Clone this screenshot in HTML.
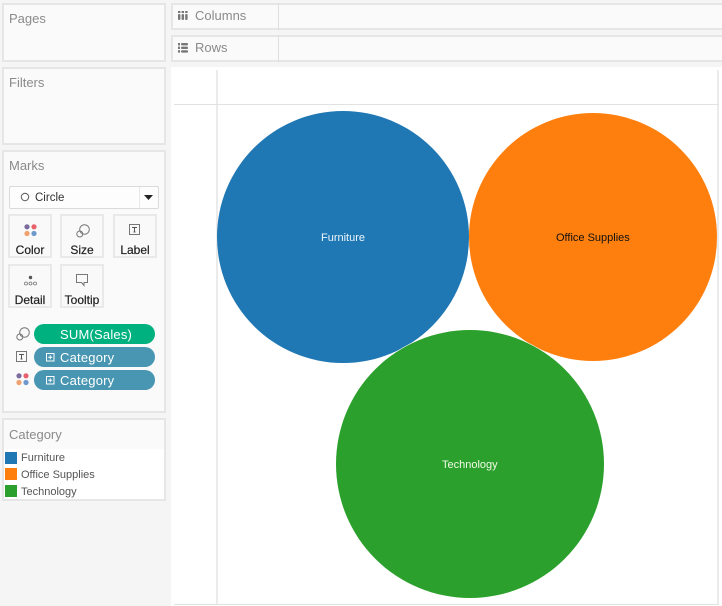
<!DOCTYPE html>
<html><head><meta charset="utf-8">
<style>
html,body{margin:0;padding:0}
body{width:722px;height:606px;overflow:hidden;background:#f5f5f5;position:relative;font-family:"Liberation Sans",sans-serif}
.a{position:absolute;box-sizing:border-box}
.p{background:#fafafa;border:2px solid #e6e6e6}
.t{position:absolute;white-space:nowrap;line-height:16px}
.h{color:#8a8a8a;font-size:13px}
.b{background:#f9f9f9;border:2px solid #e9e9e9;width:44px;height:44px}
.bl{position:absolute;white-space:nowrap;font-size:12px;color:#222;line-height:14px;text-align:center;-webkit-text-stroke:.2px #222}
.pill{position:absolute;left:34px;width:121px;height:20px;border-radius:10px;color:#fff;font-size:13px;line-height:21px;letter-spacing:.2px}
.leg{font-size:11px;color:#555;left:21px}
.sw{position:absolute;left:5px;width:12px;height:12px}
svg{position:absolute;overflow:visible}
</style></head><body>

<div class="a p" style="left:2px;top:3px;width:164px;height:59px"></div>
<div class="t h" style="left:9px;top:11px">Pages</div>
<div class="a p" style="left:2px;top:67px;width:164px;height:78px"></div>
<div class="t h" style="left:9px;top:75px">Filters</div>
<div class="a p" style="left:2px;top:150px;width:164px;height:263px"></div>
<div class="t h" style="left:9px;top:158px">Marks</div>
<div class="a p" style="left:2px;top:418px;width:164px;height:83px"></div>
<div class="a" style="left:4px;top:449px;width:160px;height:50px;background:#fff"></div>
<div class="t h" style="left:9px;top:427px">Category</div>

<div class="a" style="left:171px;top:3px;width:551px;height:27px;background:#fafafa;border:2px solid #e6e6e6;border-right:0"></div>
<div class="a" style="left:278px;top:3px;width:1px;height:27px;background:#dfdfdf"></div>
<div class="t h" style="left:195px;top:8px">Columns</div>
<div class="a" style="left:171px;top:35px;width:551px;height:27px;background:#fafafa;border:2px solid #e6e6e6;border-right:0"></div>
<div class="a" style="left:278px;top:35px;width:1px;height:27px;background:#dfdfdf"></div>
<div class="t h" style="left:195px;top:40px">Rows</div>

<svg style="left:178px;top:11px" width="10" height="9" viewBox="0 0 10 9"><g fill="#777"><rect x="0" y="0" width="2.400" height="2"/><rect x="3.600" y="0" width="2.400" height="2"/><rect x="7.200" y="0" width="2.400" height="2"/><rect x="0" y="3" width="2.400" height="6" rx="1"/><rect x="3.600" y="3" width="2.400" height="6" rx="1"/><rect x="7.200" y="3" width="2.400" height="6" rx="1"/></g></svg>
<svg style="left:178px;top:43px" width="10" height="10" viewBox="0 0 10 10"><g fill="#777"><rect x="0" y="0" width="2" height="2.400"/><rect x="0" y="3.600" width="2" height="2.400"/><rect x="0" y="7.200" width="2" height="2.400"/><rect x="3" y="0" width="7" height="2.400" rx="1"/><rect x="3" y="3.600" width="7" height="2.400" rx="1"/><rect x="3" y="7.200" width="7" height="2.400" rx="1"/></g></svg>

<div class="a" style="left:171px;top:67px;width:551px;height:539px;background:#fff"></div>
<div class="a" style="left:216px;top:70px;width:2px;height:535px;background:#ebebeb"></div>
<div class="a" style="left:717px;top:70px;width:2px;height:535px;background:#ebebeb"></div>
<div class="a" style="left:174px;top:104px;width:545px;height:1px;background:#e2e2e2"></div>
<div class="a" style="left:174px;top:604px;width:545px;height:1px;background:#e2e2e2"></div>

<svg style="left:0;top:0" width="722" height="606">
<circle cx="343" cy="237" r="126" fill="#1f77b4"/>
<circle cx="593" cy="237" r="124" fill="#ff7f0e"/>
<circle cx="470" cy="464" r="134.500" fill="#fff"/>
<circle cx="470" cy="464" r="134" fill="#2ca02c"/>
</svg>
<div class="t" style="left:321px;top:230px;font-size:11px;color:#eef6fb">Furniture</div>
<div class="t" style="left:556px;top:230px;font-size:11px;color:#111">Office Supplies</div>
<div class="t" style="left:442px;top:457px;font-size:11px;color:#f0fbe8">Technology</div>

<!-- Mark type dropdown -->
<div class="a" style="left:9px;top:186px;width:150px;height:23px;background:#fdfdfd;border:1px solid #dadada;border-radius:2px"></div>
<div class="a" style="left:139px;top:187px;width:1px;height:21px;background:#e8e8e8"></div>
<svg style="left:20px;top:192px" width="10" height="10"><circle cx="5" cy="5" r="3.700" fill="none" stroke="#666" stroke-width="1.100"/></svg>
<div class="t" style="left:35px;top:190px;font-size:11.500px;color:#333">Circle</div>
<svg style="left:144px;top:195px" width="10" height="6"><path d="M0 0H9L4.500 5Z" fill="#222"/></svg>

<!-- Buttons -->
<div class="a b" style="left:8px;top:214px"></div>
<div class="a b" style="left:60px;top:214px"></div>
<div class="a b" style="left:113px;top:214px"></div>
<div class="a b" style="left:8px;top:264px"></div>
<div class="a b" style="left:60px;top:264px"></div>
<div class="bl" style="left:8px;width:44px;top:243px">Color</div>
<div class="bl" style="left:60px;width:44px;top:243px">Size</div>
<div class="bl" style="left:113px;width:44px;top:243px">Label</div>
<div class="bl" style="left:8px;width:44px;top:293px">Detail</div>
<div class="bl" style="left:60px;width:44px;top:293px">Tooltip</div>

<svg style="left:24px;top:224px" width="14" height="13"><circle cx="3" cy="2.800" r="2.600" fill="#7b6a9c"/><circle cx="10" cy="2.800" r="2.600" fill="#e8616d"/><circle cx="3" cy="9.500" r="2.600" fill="#f2a26f"/><circle cx="10" cy="9.500" r="2.600" fill="#6f98cc"/></svg>
<svg style="left:76px;top:224px" width="14" height="14" fill="none" stroke="#777" stroke-width="1"><circle cx="8.500" cy="5.500" r="4.800" fill="#f9f9f9"/><circle cx="3.800" cy="10" r="3"/></svg>
<svg style="left:129px;top:224px" width="12" height="12"><rect x=".5" y=".5" width="10" height="10" fill="none" stroke="#777"/><path d="M3 3.500H8M5.500 3.500V8M4.500 8H6.500" stroke="#555" fill="none"/></svg>
<svg style="left:24px;top:275px" width="14" height="12" fill="none" stroke="#777" stroke-width=".8"><circle cx="6.500" cy="2.500" r="1.700" fill="#555" stroke="none"/><circle cx="2" cy="8.500" r="1.500"/><circle cx="6.500" cy="8.500" r="1.500"/><circle cx="11" cy="8.500" r="1.500"/></svg>
<svg style="left:76px;top:274px" width="13" height="13"><path d="M.5 .5H11.500V8.500H8V11.500L5.500 8.500H.5Z" fill="none" stroke="#777"/></svg>

<!-- Pills -->
<div class="pill" style="top:324px;background:#00b180;text-indent:26px">SUM(Sales)</div>
<div class="pill" style="top:347px;background:#4996b2;text-indent:26px">Category</div>
<div class="pill" style="top:370px;background:#4996b2;text-indent:26px">Category</div>
<svg style="left:46px;top:353px" width="9" height="9"><rect x=".5" y=".5" width="7.500" height="7.500" fill="none" stroke="#fff"/><path d="M2.200 4.250H6.300M4.250 2.200V6.300" stroke="#fff"/></svg>
<svg style="left:46px;top:376px" width="9" height="9"><rect x=".5" y=".5" width="7.500" height="7.500" fill="none" stroke="#fff"/><path d="M2.200 4.250H6.300M4.250 2.200V6.300" stroke="#fff"/></svg>
<svg style="left:16px;top:327px" width="14" height="14" fill="none" stroke="#777" stroke-width="1"><circle cx="8.500" cy="5.500" r="4.800" fill="#fafafa"/><circle cx="3.800" cy="10" r="3"/></svg>
<svg style="left:16px;top:351px" width="12" height="12"><rect x=".5" y=".5" width="10" height="10" fill="none" stroke="#777"/><path d="M3 3.500H8M5.500 3.500V8M4.500 8H6.500" stroke="#555" fill="none"/></svg>
<svg style="left:16px;top:373px" width="14" height="13"><circle cx="3" cy="2.800" r="2.600" fill="#7b6a9c"/><circle cx="10" cy="2.800" r="2.600" fill="#e8616d"/><circle cx="3" cy="9.500" r="2.600" fill="#f2a26f"/><circle cx="10" cy="9.500" r="2.600" fill="#6f98cc"/></svg>

<!-- Legend -->
<div class="sw" style="top:452px;background:#1f77b4"></div>
<div class="sw" style="top:468px;background:#ff7f0e"></div>
<div class="sw" style="top:485px;background:#2ca02c"></div>
<div class="t leg" style="top:450px">Furniture</div>
<div class="t leg" style="top:467px">Office Supplies</div>
<div class="t leg" style="top:484px">Technology</div>
</body></html>
